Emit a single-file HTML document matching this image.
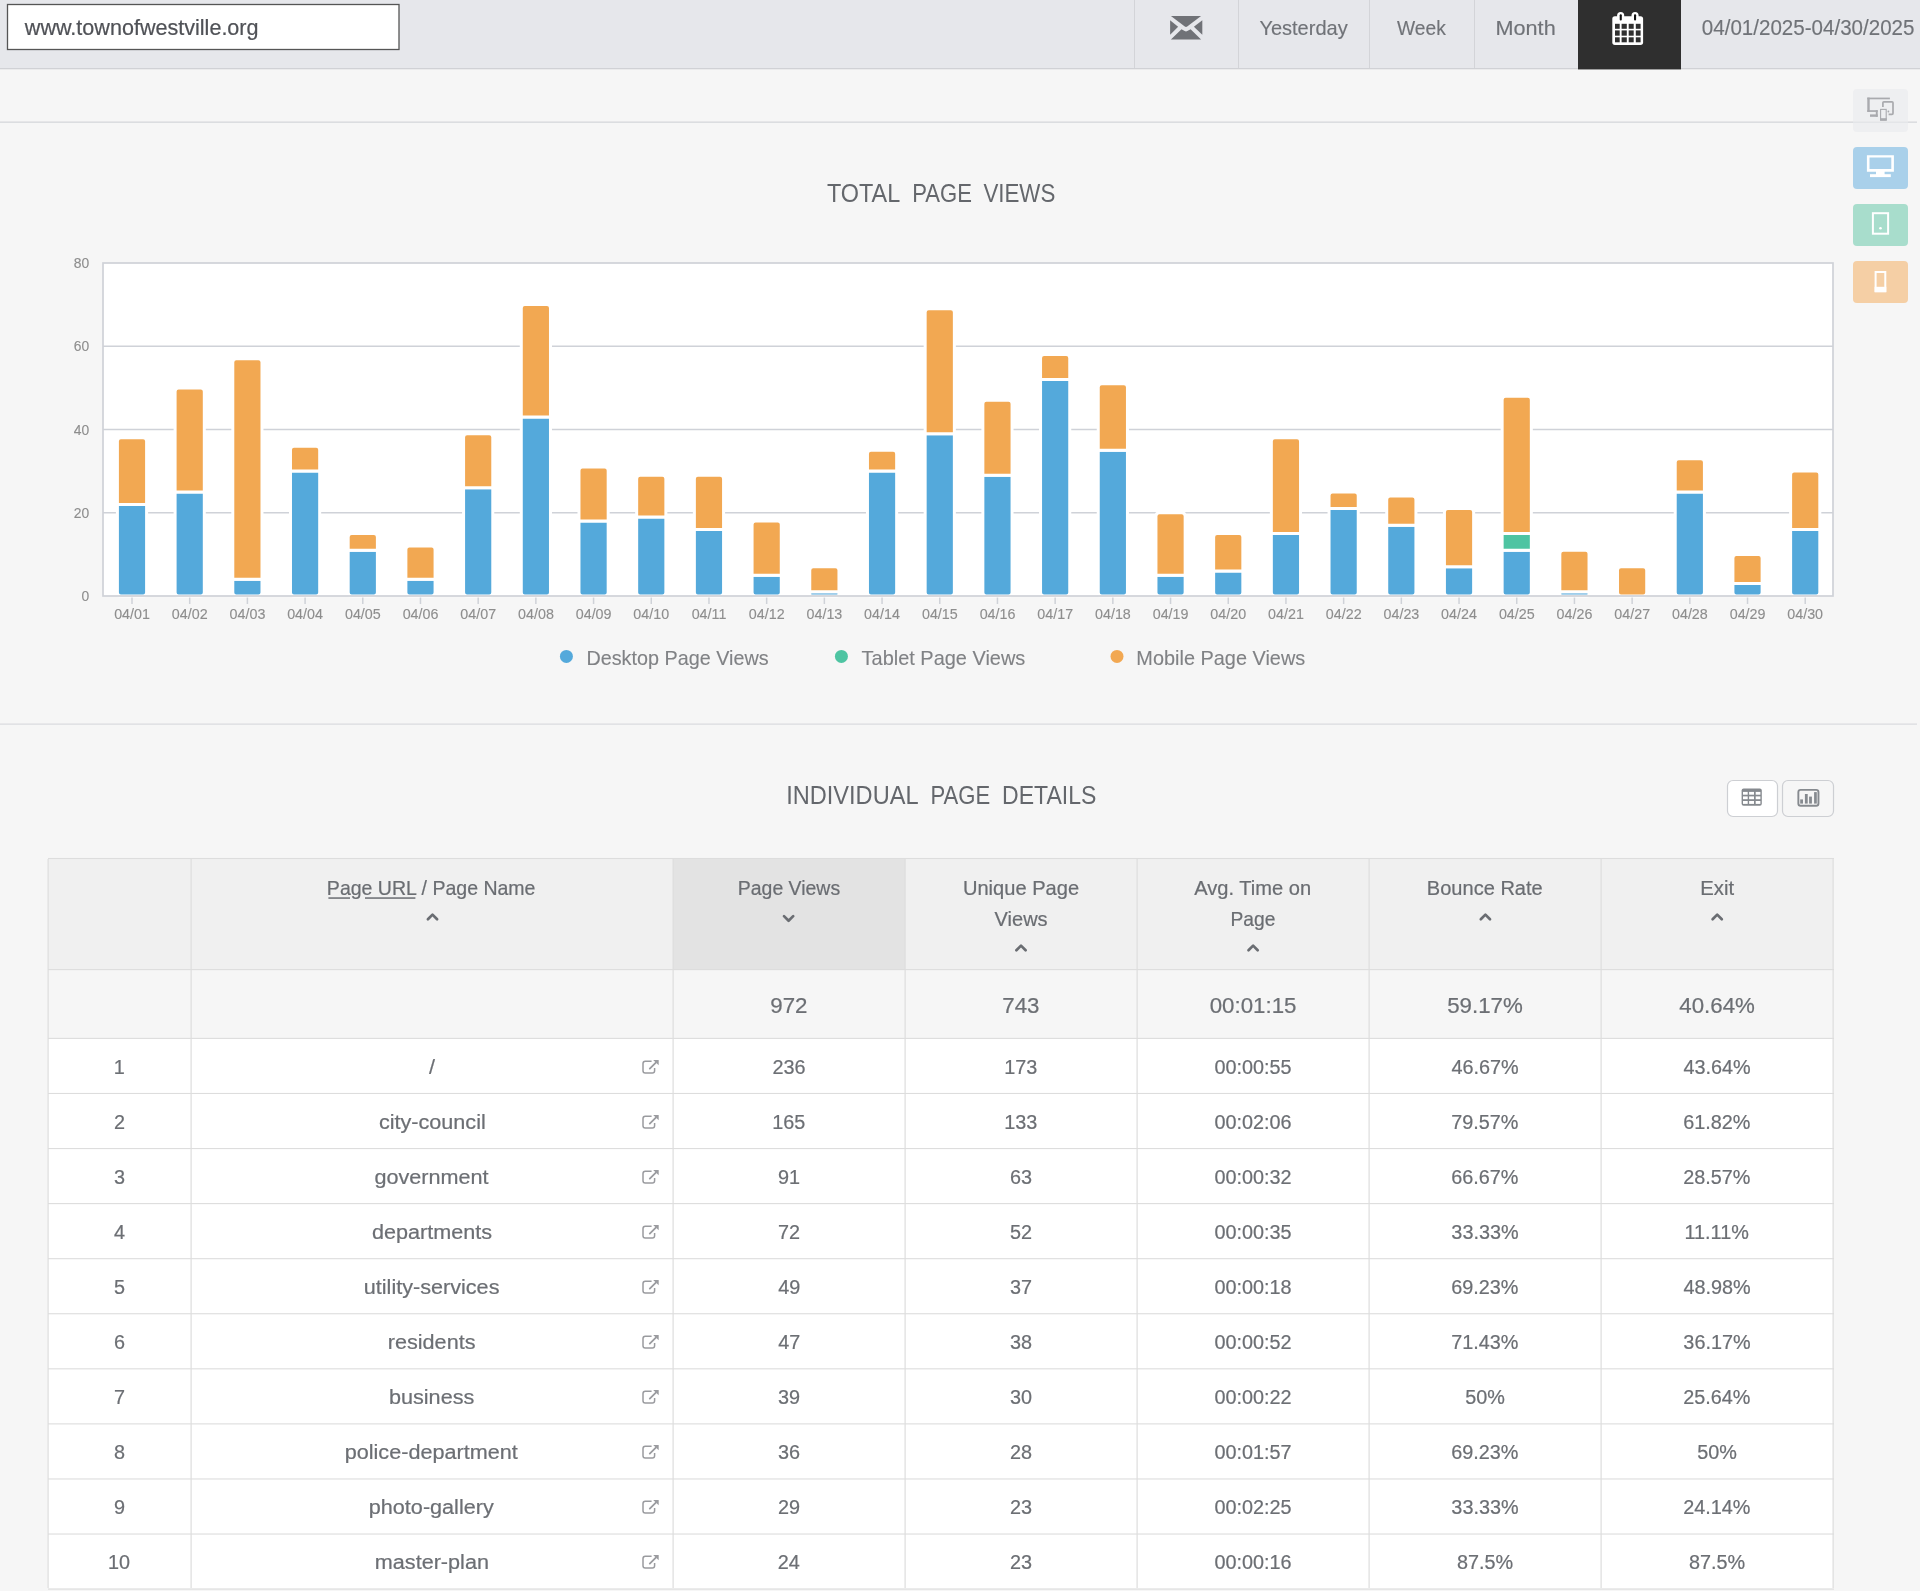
<!DOCTYPE html>
<html><head><meta charset="utf-8"><title>Total Page Views</title><style>
html,body{margin:0;padding:0}
body{width:1920px;height:1591px;overflow:hidden;background:#f6f6f6;position:relative}
svg{position:absolute;left:0;top:0;will-change:transform}
text{font-family:"Liberation Sans",sans-serif}
</style></head>
<body>
<svg width="1920" height="1591" viewBox="0 0 1920 1591">
<rect x="0" y="0" width="1920" height="1591" fill="#f6f6f6"/>
<rect x="0" y="0" width="1920" height="68" fill="#e6e7eb"/>
<rect x="0" y="68" width="1920" height="1.3" fill="#d0d1d5"/>
<rect x="7.5" y="4.5" width="391.5" height="45" fill="#ffffff" stroke="#555555" stroke-width="1.3"/>
<rect x="1134" y="0" width="1" height="68" fill="#d3d4d8"/>
<rect x="1238" y="0" width="1" height="68" fill="#d3d4d8"/>
<rect x="1369" y="0" width="1" height="68" fill="#d3d4d8"/>
<rect x="1474" y="0" width="1" height="68" fill="#d3d4d8"/>
<rect x="1578" y="0" width="103" height="69.4" fill="#2f2f2f"/>
<rect x="0" y="121.6" width="1917" height="1.2" fill="#d9dade"/>
<rect x="1853" y="89" width="55" height="43" rx="4" fill="#eeeff1"/>
<rect x="0" y="121.6" width="1917" height="1.2" fill="#d9dade" opacity="0.6"/>
<rect x="1853" y="147" width="55" height="42" rx="4" fill="#a9d0ea"/>
<rect x="1853" y="204" width="55" height="42" rx="4" fill="#a8ddcc"/>
<rect x="1853" y="261" width="55" height="42" rx="4" fill="#f5cfa5"/>
<rect x="0" y="723.5" width="1917" height="1.2" fill="#d9dade"/>
<rect x="103.0" y="263" width="1730.0" height="333.0" fill="#ffffff"/>
<line x1="103.0" y1="512.75" x2="1833.0" y2="512.75" stroke="#cfd2d8" stroke-width="1.7"/>
<line x1="103.0" y1="429.5" x2="1833.0" y2="429.5" stroke="#cfd2d8" stroke-width="1.7"/>
<line x1="103.0" y1="346.25" x2="1833.0" y2="346.25" stroke="#cfd2d8" stroke-width="1.7"/>
<line x1="132.0" y1="597" x2="132.0" y2="604" stroke="#cfd2d8" stroke-width="1.5"/>
<path d="M117.40,504.43 Q117.40,504.43 117.40,504.43 L146.60,504.43 Q146.60,504.43 146.60,504.43 L146.60,592.50 Q146.60,596.00 143.10,596.00 L120.90,596.00 Q117.40,596.00 117.40,592.50 Z" fill="#54a9db" stroke="#ffffff" stroke-width="3"/>
<path d="M117.40,441.33 Q117.40,437.83 120.90,437.83 L143.10,437.83 Q146.60,437.83 146.60,441.33 L146.60,504.43 Q146.60,504.43 146.60,504.43 L117.40,504.43 Q117.40,504.43 117.40,504.43 Z" fill="#f2a852" stroke="#ffffff" stroke-width="3"/>
<line x1="189.697" y1="597" x2="189.697" y2="604" stroke="#cfd2d8" stroke-width="1.5"/>
<path d="M175.10,491.94 Q175.10,491.94 175.10,491.94 L204.30,491.94 Q204.30,491.94 204.30,491.94 L204.30,592.50 Q204.30,596.00 200.80,596.00 L178.60,596.00 Q175.10,596.00 175.10,592.50 Z" fill="#54a9db" stroke="#ffffff" stroke-width="3"/>
<path d="M175.10,391.38 Q175.10,387.88 178.60,387.88 L200.80,387.88 Q204.30,387.88 204.30,391.38 L204.30,491.94 Q204.30,491.94 204.30,491.94 L175.10,491.94 Q175.10,491.94 175.10,491.94 Z" fill="#f2a852" stroke="#ffffff" stroke-width="3"/>
<line x1="247.394" y1="597" x2="247.394" y2="604" stroke="#cfd2d8" stroke-width="1.5"/>
<path d="M232.79,579.35 Q232.79,579.35 232.79,579.35 L261.99,579.35 Q261.99,579.35 261.99,579.35 L261.99,592.50 Q261.99,596.00 258.49,596.00 L236.29,596.00 Q232.79,596.00 232.79,592.50 Z" fill="#54a9db" stroke="#ffffff" stroke-width="3"/>
<path d="M232.79,362.24 Q232.79,358.74 236.29,358.74 L258.49,358.74 Q261.99,358.74 261.99,362.24 L261.99,579.35 Q261.99,579.35 261.99,579.35 L232.79,579.35 Q232.79,579.35 232.79,579.35 Z" fill="#f2a852" stroke="#ffffff" stroke-width="3"/>
<line x1="305.091" y1="597" x2="305.091" y2="604" stroke="#cfd2d8" stroke-width="1.5"/>
<path d="M290.49,471.12 Q290.49,471.12 290.49,471.12 L319.69,471.12 Q319.69,471.12 319.69,471.12 L319.69,592.50 Q319.69,596.00 316.19,596.00 L293.99,596.00 Q290.49,596.00 290.49,592.50 Z" fill="#54a9db" stroke="#ffffff" stroke-width="3"/>
<path d="M290.49,449.65 Q290.49,446.15 293.99,446.15 L316.19,446.15 Q319.69,446.15 319.69,449.65 L319.69,471.12 Q319.69,471.12 319.69,471.12 L290.49,471.12 Q290.49,471.12 290.49,471.12 Z" fill="#f2a852" stroke="#ffffff" stroke-width="3"/>
<line x1="362.788" y1="597" x2="362.788" y2="604" stroke="#cfd2d8" stroke-width="1.5"/>
<path d="M348.19,550.21 Q348.19,550.21 348.19,550.21 L377.39,550.21 Q377.39,550.21 377.39,550.21 L377.39,592.50 Q377.39,596.00 373.89,596.00 L351.69,596.00 Q348.19,596.00 348.19,592.50 Z" fill="#54a9db" stroke="#ffffff" stroke-width="3"/>
<path d="M348.19,537.06 Q348.19,533.56 351.69,533.56 L373.89,533.56 Q377.39,533.56 377.39,537.06 L377.39,550.21 Q377.39,550.21 377.39,550.21 L348.19,550.21 Q348.19,550.21 348.19,550.21 Z" fill="#f2a852" stroke="#ffffff" stroke-width="3"/>
<line x1="420.485" y1="597" x2="420.485" y2="604" stroke="#cfd2d8" stroke-width="1.5"/>
<path d="M405.88,579.35 Q405.88,579.35 405.88,579.35 L435.08,579.35 Q435.08,579.35 435.08,579.35 L435.08,592.50 Q435.08,596.00 431.58,596.00 L409.38,596.00 Q405.88,596.00 405.88,592.50 Z" fill="#54a9db" stroke="#ffffff" stroke-width="3"/>
<path d="M405.88,549.55 Q405.88,546.05 409.38,546.05 L431.58,546.05 Q435.08,546.05 435.08,549.55 L435.08,579.35 Q435.08,579.35 435.08,579.35 L405.88,579.35 Q405.88,579.35 405.88,579.35 Z" fill="#f2a852" stroke="#ffffff" stroke-width="3"/>
<line x1="478.182" y1="597" x2="478.182" y2="604" stroke="#cfd2d8" stroke-width="1.5"/>
<path d="M463.58,487.77 Q463.58,487.77 463.58,487.77 L492.78,487.77 Q492.78,487.77 492.78,487.77 L492.78,592.50 Q492.78,596.00 489.28,596.00 L467.08,596.00 Q463.58,596.00 463.58,592.50 Z" fill="#54a9db" stroke="#ffffff" stroke-width="3"/>
<path d="M463.58,437.16 Q463.58,433.66 467.08,433.66 L489.28,433.66 Q492.78,433.66 492.78,437.16 L492.78,487.77 Q492.78,487.77 492.78,487.77 L463.58,487.77 Q463.58,487.77 463.58,487.77 Z" fill="#f2a852" stroke="#ffffff" stroke-width="3"/>
<line x1="535.879" y1="597" x2="535.879" y2="604" stroke="#cfd2d8" stroke-width="1.5"/>
<path d="M521.28,417.01 Q521.28,417.01 521.28,417.01 L550.48,417.01 Q550.48,417.01 550.48,417.01 L550.48,592.50 Q550.48,596.00 546.98,596.00 L524.78,596.00 Q521.28,596.00 521.28,592.50 Z" fill="#54a9db" stroke="#ffffff" stroke-width="3"/>
<path d="M521.28,308.12 Q521.28,304.62 524.78,304.62 L546.98,304.62 Q550.48,304.62 550.48,308.12 L550.48,417.01 Q550.48,417.01 550.48,417.01 L521.28,417.01 Q521.28,417.01 521.28,417.01 Z" fill="#f2a852" stroke="#ffffff" stroke-width="3"/>
<line x1="593.576" y1="597" x2="593.576" y2="604" stroke="#cfd2d8" stroke-width="1.5"/>
<path d="M578.98,521.08 Q578.98,521.08 578.98,521.08 L608.18,521.08 Q608.18,521.08 608.18,521.08 L608.18,592.50 Q608.18,596.00 604.68,596.00 L582.48,596.00 Q578.98,596.00 578.98,592.50 Z" fill="#54a9db" stroke="#ffffff" stroke-width="3"/>
<path d="M578.98,470.46 Q578.98,466.96 582.48,466.96 L604.68,466.96 Q608.18,466.96 608.18,470.46 L608.18,521.08 Q608.18,521.08 608.18,521.08 L578.98,521.08 Q578.98,521.08 578.98,521.08 Z" fill="#f2a852" stroke="#ffffff" stroke-width="3"/>
<line x1="651.273" y1="597" x2="651.273" y2="604" stroke="#cfd2d8" stroke-width="1.5"/>
<path d="M636.67,516.91 Q636.67,516.91 636.67,516.91 L665.87,516.91 Q665.87,516.91 665.87,516.91 L665.87,592.50 Q665.87,596.00 662.37,596.00 L640.17,596.00 Q636.67,596.00 636.67,592.50 Z" fill="#54a9db" stroke="#ffffff" stroke-width="3"/>
<path d="M636.67,478.79 Q636.67,475.29 640.17,475.29 L662.37,475.29 Q665.87,475.29 665.87,478.79 L665.87,516.91 Q665.87,516.91 665.87,516.91 L636.67,516.91 Q636.67,516.91 636.67,516.91 Z" fill="#f2a852" stroke="#ffffff" stroke-width="3"/>
<line x1="708.97" y1="597" x2="708.97" y2="604" stroke="#cfd2d8" stroke-width="1.5"/>
<path d="M694.37,529.40 Q694.37,529.40 694.37,529.40 L723.57,529.40 Q723.57,529.40 723.57,529.40 L723.57,592.50 Q723.57,596.00 720.07,596.00 L697.87,596.00 Q694.37,596.00 694.37,592.50 Z" fill="#54a9db" stroke="#ffffff" stroke-width="3"/>
<path d="M694.37,478.79 Q694.37,475.29 697.87,475.29 L720.07,475.29 Q723.57,475.29 723.57,478.79 L723.57,529.40 Q723.57,529.40 723.57,529.40 L694.37,529.40 Q694.37,529.40 694.37,529.40 Z" fill="#f2a852" stroke="#ffffff" stroke-width="3"/>
<line x1="766.667" y1="597" x2="766.667" y2="604" stroke="#cfd2d8" stroke-width="1.5"/>
<path d="M752.07,575.19 Q752.07,575.19 752.07,575.19 L781.27,575.19 Q781.27,575.19 781.27,575.19 L781.27,592.50 Q781.27,596.00 777.77,596.00 L755.57,596.00 Q752.07,596.00 752.07,592.50 Z" fill="#54a9db" stroke="#ffffff" stroke-width="3"/>
<path d="M752.07,524.58 Q752.07,521.08 755.57,521.08 L777.77,521.08 Q781.27,521.08 781.27,524.58 L781.27,575.19 Q781.27,575.19 781.27,575.19 L752.07,575.19 Q752.07,575.19 752.07,575.19 Z" fill="#f2a852" stroke="#ffffff" stroke-width="3"/>
<line x1="824.364" y1="597" x2="824.364" y2="604" stroke="#cfd2d8" stroke-width="1.5"/>
<path d="M809.76,591.84 Q809.76,591.84 809.76,591.84 L838.96,591.84 Q838.96,591.84 838.96,591.84 L838.96,593.92 Q838.96,596.00 836.88,596.00 L811.85,596.00 Q809.76,596.00 809.76,593.92 Z" fill="#54a9db" stroke="#ffffff" stroke-width="3"/>
<path d="M809.76,570.36 Q809.76,566.86 813.26,566.86 L835.46,566.86 Q838.96,566.86 838.96,570.36 L838.96,591.84 Q838.96,591.84 838.96,591.84 L809.76,591.84 Q809.76,591.84 809.76,591.84 Z" fill="#f2a852" stroke="#ffffff" stroke-width="3"/>
<line x1="882.061" y1="597" x2="882.061" y2="604" stroke="#cfd2d8" stroke-width="1.5"/>
<path d="M867.46,471.12 Q867.46,471.12 867.46,471.12 L896.66,471.12 Q896.66,471.12 896.66,471.12 L896.66,592.50 Q896.66,596.00 893.16,596.00 L870.96,596.00 Q867.46,596.00 867.46,592.50 Z" fill="#54a9db" stroke="#ffffff" stroke-width="3"/>
<path d="M867.46,453.81 Q867.46,450.31 870.96,450.31 L893.16,450.31 Q896.66,450.31 896.66,453.81 L896.66,471.12 Q896.66,471.12 896.66,471.12 L867.46,471.12 Q867.46,471.12 867.46,471.12 Z" fill="#f2a852" stroke="#ffffff" stroke-width="3"/>
<line x1="939.758" y1="597" x2="939.758" y2="604" stroke="#cfd2d8" stroke-width="1.5"/>
<path d="M925.16,433.66 Q925.16,433.66 925.16,433.66 L954.36,433.66 Q954.36,433.66 954.36,433.66 L954.36,592.50 Q954.36,596.00 950.86,596.00 L928.66,596.00 Q925.16,596.00 925.16,592.50 Z" fill="#54a9db" stroke="#ffffff" stroke-width="3"/>
<path d="M925.16,312.29 Q925.16,308.79 928.66,308.79 L950.86,308.79 Q954.36,308.79 954.36,312.29 L954.36,433.66 Q954.36,433.66 954.36,433.66 L925.16,433.66 Q925.16,433.66 925.16,433.66 Z" fill="#f2a852" stroke="#ffffff" stroke-width="3"/>
<line x1="997.455" y1="597" x2="997.455" y2="604" stroke="#cfd2d8" stroke-width="1.5"/>
<path d="M982.86,475.29 Q982.86,475.29 982.86,475.29 L1012.06,475.29 Q1012.06,475.29 1012.06,475.29 L1012.06,592.50 Q1012.06,596.00 1008.56,596.00 L986.36,596.00 Q982.86,596.00 982.86,592.50 Z" fill="#54a9db" stroke="#ffffff" stroke-width="3"/>
<path d="M982.86,403.86 Q982.86,400.36 986.36,400.36 L1008.56,400.36 Q1012.06,400.36 1012.06,403.86 L1012.06,475.29 Q1012.06,475.29 1012.06,475.29 L982.86,475.29 Q982.86,475.29 982.86,475.29 Z" fill="#f2a852" stroke="#ffffff" stroke-width="3"/>
<line x1="1055.152" y1="597" x2="1055.152" y2="604" stroke="#cfd2d8" stroke-width="1.5"/>
<path d="M1040.55,379.55 Q1040.55,379.55 1040.55,379.55 L1069.75,379.55 Q1069.75,379.55 1069.75,379.55 L1069.75,592.50 Q1069.75,596.00 1066.25,596.00 L1044.05,596.00 Q1040.55,596.00 1040.55,592.50 Z" fill="#54a9db" stroke="#ffffff" stroke-width="3"/>
<path d="M1040.55,358.08 Q1040.55,354.58 1044.05,354.58 L1066.25,354.58 Q1069.75,354.58 1069.75,358.08 L1069.75,379.55 Q1069.75,379.55 1069.75,379.55 L1040.55,379.55 Q1040.55,379.55 1040.55,379.55 Z" fill="#f2a852" stroke="#ffffff" stroke-width="3"/>
<line x1="1112.8490000000002" y1="597" x2="1112.8490000000002" y2="604" stroke="#cfd2d8" stroke-width="1.5"/>
<path d="M1098.25,450.31 Q1098.25,450.31 1098.25,450.31 L1127.45,450.31 Q1127.45,450.31 1127.45,450.31 L1127.45,592.50 Q1127.45,596.00 1123.95,596.00 L1101.75,596.00 Q1098.25,596.00 1098.25,592.50 Z" fill="#54a9db" stroke="#ffffff" stroke-width="3"/>
<path d="M1098.25,387.21 Q1098.25,383.71 1101.75,383.71 L1123.95,383.71 Q1127.45,383.71 1127.45,387.21 L1127.45,450.31 Q1127.45,450.31 1127.45,450.31 L1098.25,450.31 Q1098.25,450.31 1098.25,450.31 Z" fill="#f2a852" stroke="#ffffff" stroke-width="3"/>
<line x1="1170.546" y1="597" x2="1170.546" y2="604" stroke="#cfd2d8" stroke-width="1.5"/>
<path d="M1155.95,575.19 Q1155.95,575.19 1155.95,575.19 L1185.15,575.19 Q1185.15,575.19 1185.15,575.19 L1185.15,592.50 Q1185.15,596.00 1181.65,596.00 L1159.45,596.00 Q1155.95,596.00 1155.95,592.50 Z" fill="#54a9db" stroke="#ffffff" stroke-width="3"/>
<path d="M1155.95,516.25 Q1155.95,512.75 1159.45,512.75 L1181.65,512.75 Q1185.15,512.75 1185.15,516.25 L1185.15,575.19 Q1185.15,575.19 1185.15,575.19 L1155.95,575.19 Q1155.95,575.19 1155.95,575.19 Z" fill="#f2a852" stroke="#ffffff" stroke-width="3"/>
<line x1="1228.243" y1="597" x2="1228.243" y2="604" stroke="#cfd2d8" stroke-width="1.5"/>
<path d="M1213.64,571.02 Q1213.64,571.02 1213.64,571.02 L1242.84,571.02 Q1242.84,571.02 1242.84,571.02 L1242.84,592.50 Q1242.84,596.00 1239.34,596.00 L1217.14,596.00 Q1213.64,596.00 1213.64,592.50 Z" fill="#54a9db" stroke="#ffffff" stroke-width="3"/>
<path d="M1213.64,537.06 Q1213.64,533.56 1217.14,533.56 L1239.34,533.56 Q1242.84,533.56 1242.84,537.06 L1242.84,571.02 Q1242.84,571.02 1242.84,571.02 L1213.64,571.02 Q1213.64,571.02 1213.64,571.02 Z" fill="#f2a852" stroke="#ffffff" stroke-width="3"/>
<line x1="1285.94" y1="597" x2="1285.94" y2="604" stroke="#cfd2d8" stroke-width="1.5"/>
<path d="M1271.34,533.56 Q1271.34,533.56 1271.34,533.56 L1300.54,533.56 Q1300.54,533.56 1300.54,533.56 L1300.54,592.50 Q1300.54,596.00 1297.04,596.00 L1274.84,596.00 Q1271.34,596.00 1271.34,592.50 Z" fill="#54a9db" stroke="#ffffff" stroke-width="3"/>
<path d="M1271.34,441.33 Q1271.34,437.83 1274.84,437.83 L1297.04,437.83 Q1300.54,437.83 1300.54,441.33 L1300.54,533.56 Q1300.54,533.56 1300.54,533.56 L1271.34,533.56 Q1271.34,533.56 1271.34,533.56 Z" fill="#f2a852" stroke="#ffffff" stroke-width="3"/>
<line x1="1343.6370000000002" y1="597" x2="1343.6370000000002" y2="604" stroke="#cfd2d8" stroke-width="1.5"/>
<path d="M1329.04,508.59 Q1329.04,508.59 1329.04,508.59 L1358.24,508.59 Q1358.24,508.59 1358.24,508.59 L1358.24,592.50 Q1358.24,596.00 1354.74,596.00 L1332.54,596.00 Q1329.04,596.00 1329.04,592.50 Z" fill="#54a9db" stroke="#ffffff" stroke-width="3"/>
<path d="M1329.04,495.44 Q1329.04,491.94 1332.54,491.94 L1354.74,491.94 Q1358.24,491.94 1358.24,495.44 L1358.24,508.59 Q1358.24,508.59 1358.24,508.59 L1329.04,508.59 Q1329.04,508.59 1329.04,508.59 Z" fill="#f2a852" stroke="#ffffff" stroke-width="3"/>
<line x1="1401.334" y1="597" x2="1401.334" y2="604" stroke="#cfd2d8" stroke-width="1.5"/>
<path d="M1386.73,525.24 Q1386.73,525.24 1386.73,525.24 L1415.93,525.24 Q1415.93,525.24 1415.93,525.24 L1415.93,592.50 Q1415.93,596.00 1412.43,596.00 L1390.23,596.00 Q1386.73,596.00 1386.73,592.50 Z" fill="#54a9db" stroke="#ffffff" stroke-width="3"/>
<path d="M1386.73,499.60 Q1386.73,496.10 1390.23,496.10 L1412.43,496.10 Q1415.93,496.10 1415.93,499.60 L1415.93,525.24 Q1415.93,525.24 1415.93,525.24 L1386.73,525.24 Q1386.73,525.24 1386.73,525.24 Z" fill="#f2a852" stroke="#ffffff" stroke-width="3"/>
<line x1="1459.031" y1="597" x2="1459.031" y2="604" stroke="#cfd2d8" stroke-width="1.5"/>
<path d="M1444.43,566.86 Q1444.43,566.86 1444.43,566.86 L1473.63,566.86 Q1473.63,566.86 1473.63,566.86 L1473.63,592.50 Q1473.63,596.00 1470.13,596.00 L1447.93,596.00 Q1444.43,596.00 1444.43,592.50 Z" fill="#54a9db" stroke="#ffffff" stroke-width="3"/>
<path d="M1444.43,512.09 Q1444.43,508.59 1447.93,508.59 L1470.13,508.59 Q1473.63,508.59 1473.63,512.09 L1473.63,566.86 Q1473.63,566.86 1473.63,566.86 L1444.43,566.86 Q1444.43,566.86 1444.43,566.86 Z" fill="#f2a852" stroke="#ffffff" stroke-width="3"/>
<line x1="1516.728" y1="597" x2="1516.728" y2="604" stroke="#cfd2d8" stroke-width="1.5"/>
<path d="M1502.13,550.21 Q1502.13,550.21 1502.13,550.21 L1531.33,550.21 Q1531.33,550.21 1531.33,550.21 L1531.33,592.50 Q1531.33,596.00 1527.83,596.00 L1505.63,596.00 Q1502.13,596.00 1502.13,592.50 Z" fill="#54a9db" stroke="#ffffff" stroke-width="3"/>
<path d="M1502.13,533.56 Q1502.13,533.56 1502.13,533.56 L1531.33,533.56 Q1531.33,533.56 1531.33,533.56 L1531.33,550.21 Q1531.33,550.21 1531.33,550.21 L1502.13,550.21 Q1502.13,550.21 1502.13,550.21 Z" fill="#4ec4a2" stroke="#ffffff" stroke-width="3"/>
<path d="M1502.13,399.70 Q1502.13,396.20 1505.63,396.20 L1527.83,396.20 Q1531.33,396.20 1531.33,399.70 L1531.33,533.56 Q1531.33,533.56 1531.33,533.56 L1502.13,533.56 Q1502.13,533.56 1502.13,533.56 Z" fill="#f2a852" stroke="#ffffff" stroke-width="3"/>
<line x1="1574.4250000000002" y1="597" x2="1574.4250000000002" y2="604" stroke="#cfd2d8" stroke-width="1.5"/>
<path d="M1559.83,591.84 Q1559.83,591.84 1559.83,591.84 L1589.03,591.84 Q1589.03,591.84 1589.03,591.84 L1589.03,593.92 Q1589.03,596.00 1586.94,596.00 L1561.91,596.00 Q1559.83,596.00 1559.83,593.92 Z" fill="#54a9db" stroke="#ffffff" stroke-width="3"/>
<path d="M1559.83,553.71 Q1559.83,550.21 1563.33,550.21 L1585.53,550.21 Q1589.03,550.21 1589.03,553.71 L1589.03,591.84 Q1589.03,591.84 1589.03,591.84 L1559.83,591.84 Q1559.83,591.84 1559.83,591.84 Z" fill="#f2a852" stroke="#ffffff" stroke-width="3"/>
<line x1="1632.122" y1="597" x2="1632.122" y2="604" stroke="#cfd2d8" stroke-width="1.5"/>
<path d="M1617.52,570.36 Q1617.52,566.86 1621.02,566.86 L1643.22,566.86 Q1646.72,566.86 1646.72,570.36 L1646.72,592.50 Q1646.72,596.00 1643.22,596.00 L1621.02,596.00 Q1617.52,596.00 1617.52,592.50 Z" fill="#f2a852" stroke="#ffffff" stroke-width="3"/>
<line x1="1689.819" y1="597" x2="1689.819" y2="604" stroke="#cfd2d8" stroke-width="1.5"/>
<path d="M1675.22,491.94 Q1675.22,491.94 1675.22,491.94 L1704.42,491.94 Q1704.42,491.94 1704.42,491.94 L1704.42,592.50 Q1704.42,596.00 1700.92,596.00 L1678.72,596.00 Q1675.22,596.00 1675.22,592.50 Z" fill="#54a9db" stroke="#ffffff" stroke-width="3"/>
<path d="M1675.22,462.14 Q1675.22,458.64 1678.72,458.64 L1700.92,458.64 Q1704.42,458.64 1704.42,462.14 L1704.42,491.94 Q1704.42,491.94 1704.42,491.94 L1675.22,491.94 Q1675.22,491.94 1675.22,491.94 Z" fill="#f2a852" stroke="#ffffff" stroke-width="3"/>
<line x1="1747.516" y1="597" x2="1747.516" y2="604" stroke="#cfd2d8" stroke-width="1.5"/>
<path d="M1732.92,583.51 Q1732.92,583.51 1732.92,583.51 L1762.12,583.51 Q1762.12,583.51 1762.12,583.51 L1762.12,592.50 Q1762.12,596.00 1758.62,596.00 L1736.42,596.00 Q1732.92,596.00 1732.92,592.50 Z" fill="#54a9db" stroke="#ffffff" stroke-width="3"/>
<path d="M1732.92,557.88 Q1732.92,554.38 1736.42,554.38 L1758.62,554.38 Q1762.12,554.38 1762.12,557.88 L1762.12,583.51 Q1762.12,583.51 1762.12,583.51 L1732.92,583.51 Q1732.92,583.51 1732.92,583.51 Z" fill="#f2a852" stroke="#ffffff" stroke-width="3"/>
<line x1="1805.2130000000002" y1="597" x2="1805.2130000000002" y2="604" stroke="#cfd2d8" stroke-width="1.5"/>
<path d="M1790.61,529.40 Q1790.61,529.40 1790.61,529.40 L1819.81,529.40 Q1819.81,529.40 1819.81,529.40 L1819.81,592.50 Q1819.81,596.00 1816.31,596.00 L1794.11,596.00 Q1790.61,596.00 1790.61,592.50 Z" fill="#54a9db" stroke="#ffffff" stroke-width="3"/>
<path d="M1790.61,474.62 Q1790.61,471.12 1794.11,471.12 L1816.31,471.12 Q1819.81,471.12 1819.81,474.62 L1819.81,529.40 Q1819.81,529.40 1819.81,529.40 L1790.61,529.40 Q1790.61,529.40 1790.61,529.40 Z" fill="#f2a852" stroke="#ffffff" stroke-width="3"/>
<rect x="103.0" y="263" width="1730.0" height="333.0" fill="none" stroke="#cfd2d8" stroke-width="1.7"/>
<circle cx="566.4" cy="656.4" r="6.5" fill="#54a9db"/>
<circle cx="841.4" cy="656.4" r="6.5" fill="#4ec4a2"/>
<circle cx="1117" cy="656.4" r="6.5" fill="#f2a852"/>
<rect x="48" y="859" width="1785" height="111" fill="#f0f0f0"/>
<rect x="673" y="859" width="232" height="111" fill="#e3e3e3"/>
<rect x="48" y="970" width="1785" height="68" fill="#f6f6f6"/>
<rect x="48" y="1038" width="1785" height="550" fill="#ffffff"/>
<rect x="48" y="857.95" width="1786" height="1.1" fill="#dddddd"/>
<rect x="48" y="969.05" width="1786" height="1.1" fill="#dddddd"/>
<rect x="48" y="1037.85" width="1786" height="1.1" fill="#dddddd"/>
<rect x="48" y="1092.92" width="1786" height="1.1" fill="#dddddd"/>
<rect x="48" y="1147.99" width="1786" height="1.1" fill="#dddddd"/>
<rect x="48" y="1203.06" width="1786" height="1.1" fill="#dddddd"/>
<rect x="48" y="1258.13" width="1786" height="1.1" fill="#dddddd"/>
<rect x="48" y="1313.20" width="1786" height="1.1" fill="#dddddd"/>
<rect x="48" y="1368.27" width="1786" height="1.1" fill="#dddddd"/>
<rect x="48" y="1423.34" width="1786" height="1.1" fill="#dddddd"/>
<rect x="48" y="1478.41" width="1786" height="1.1" fill="#dddddd"/>
<rect x="48" y="1533.48" width="1786" height="1.1" fill="#dddddd"/>
<rect x="48" y="1588.55" width="1786" height="1.1" fill="#dddddd"/>
<rect x="47.5" y="859" width="1.2" height="729" fill="#dddddd"/>
<rect x="190.5" y="859" width="1.2" height="729" fill="#dddddd"/>
<rect x="672.5" y="859" width="1.2" height="729" fill="#dddddd"/>
<rect x="904.5" y="859" width="1.2" height="729" fill="#dddddd"/>
<rect x="1136.5" y="859" width="1.2" height="729" fill="#dddddd"/>
<rect x="1368.5" y="859" width="1.2" height="729" fill="#dddddd"/>
<rect x="1600.5" y="859" width="1.2" height="729" fill="#dddddd"/>
<rect x="1832.5" y="859" width="1.2" height="729" fill="#dddddd"/>
<rect x="328.4" y="897.3" width="21.6" height="1.5" fill="#6a6d72"/>
<rect x="365" y="897.3" width="50.4" height="1.5" fill="#6a6d72"/>
<path d="M427.9,919.2 L432.5,914.6 L437.1,919.2" fill="none" stroke="#6a6d72" stroke-width="2.7" stroke-linecap="round" stroke-linejoin="round"/>
<path d="M784.0,916.1 L788.6,920.7 L793.2,916.1" fill="none" stroke="#6a6d72" stroke-width="2.7" stroke-linecap="round" stroke-linejoin="round"/>
<path d="M1016.4,950.2 L1021,945.6 L1025.6,950.2" fill="none" stroke="#6a6d72" stroke-width="2.7" stroke-linecap="round" stroke-linejoin="round"/>
<path d="M1248.5,950.2 L1253.1,945.6 L1257.6999999999998,950.2" fill="none" stroke="#6a6d72" stroke-width="2.7" stroke-linecap="round" stroke-linejoin="round"/>
<path d="M1480.8000000000002,919.2 L1485.4,914.6 L1490.0,919.2" fill="none" stroke="#6a6d72" stroke-width="2.7" stroke-linecap="round" stroke-linejoin="round"/>
<path d="M1712.6000000000001,919.2 L1717.2,914.6 L1721.8,919.2" fill="none" stroke="#6a6d72" stroke-width="2.7" stroke-linecap="round" stroke-linejoin="round"/>
<g transform="translate(0 0)" fill="none" stroke="#9a9b9f" stroke-width="1.5"><path d="M651.6,1061.3 H645.3 Q643,1061.3 643,1063.6 V1070.7 Q643,1073 645.3,1073 H652.3 Q654.6,1073 654.6,1070.7 V1068.1"/><path d="M649.8,1068.6 L655.6,1062.8" stroke-width="1.8" stroke-linecap="round"/><path d="M653.2,1060 H658.7 V1065.3 Z" fill="#9a9b9f" stroke="none"/></g>
<g transform="translate(0 55)" fill="none" stroke="#9a9b9f" stroke-width="1.5"><path d="M651.6,1061.3 H645.3 Q643,1061.3 643,1063.6 V1070.7 Q643,1073 645.3,1073 H652.3 Q654.6,1073 654.6,1070.7 V1068.1"/><path d="M649.8,1068.6 L655.6,1062.8" stroke-width="1.8" stroke-linecap="round"/><path d="M653.2,1060 H658.7 V1065.3 Z" fill="#9a9b9f" stroke="none"/></g>
<g transform="translate(0 110)" fill="none" stroke="#9a9b9f" stroke-width="1.5"><path d="M651.6,1061.3 H645.3 Q643,1061.3 643,1063.6 V1070.7 Q643,1073 645.3,1073 H652.3 Q654.6,1073 654.6,1070.7 V1068.1"/><path d="M649.8,1068.6 L655.6,1062.8" stroke-width="1.8" stroke-linecap="round"/><path d="M653.2,1060 H658.7 V1065.3 Z" fill="#9a9b9f" stroke="none"/></g>
<g transform="translate(0 165)" fill="none" stroke="#9a9b9f" stroke-width="1.5"><path d="M651.6,1061.3 H645.3 Q643,1061.3 643,1063.6 V1070.7 Q643,1073 645.3,1073 H652.3 Q654.6,1073 654.6,1070.7 V1068.1"/><path d="M649.8,1068.6 L655.6,1062.8" stroke-width="1.8" stroke-linecap="round"/><path d="M653.2,1060 H658.7 V1065.3 Z" fill="#9a9b9f" stroke="none"/></g>
<g transform="translate(0 220)" fill="none" stroke="#9a9b9f" stroke-width="1.5"><path d="M651.6,1061.3 H645.3 Q643,1061.3 643,1063.6 V1070.7 Q643,1073 645.3,1073 H652.3 Q654.6,1073 654.6,1070.7 V1068.1"/><path d="M649.8,1068.6 L655.6,1062.8" stroke-width="1.8" stroke-linecap="round"/><path d="M653.2,1060 H658.7 V1065.3 Z" fill="#9a9b9f" stroke="none"/></g>
<g transform="translate(0 275)" fill="none" stroke="#9a9b9f" stroke-width="1.5"><path d="M651.6,1061.3 H645.3 Q643,1061.3 643,1063.6 V1070.7 Q643,1073 645.3,1073 H652.3 Q654.6,1073 654.6,1070.7 V1068.1"/><path d="M649.8,1068.6 L655.6,1062.8" stroke-width="1.8" stroke-linecap="round"/><path d="M653.2,1060 H658.7 V1065.3 Z" fill="#9a9b9f" stroke="none"/></g>
<g transform="translate(0 330)" fill="none" stroke="#9a9b9f" stroke-width="1.5"><path d="M651.6,1061.3 H645.3 Q643,1061.3 643,1063.6 V1070.7 Q643,1073 645.3,1073 H652.3 Q654.6,1073 654.6,1070.7 V1068.1"/><path d="M649.8,1068.6 L655.6,1062.8" stroke-width="1.8" stroke-linecap="round"/><path d="M653.2,1060 H658.7 V1065.3 Z" fill="#9a9b9f" stroke="none"/></g>
<g transform="translate(0 385)" fill="none" stroke="#9a9b9f" stroke-width="1.5"><path d="M651.6,1061.3 H645.3 Q643,1061.3 643,1063.6 V1070.7 Q643,1073 645.3,1073 H652.3 Q654.6,1073 654.6,1070.7 V1068.1"/><path d="M649.8,1068.6 L655.6,1062.8" stroke-width="1.8" stroke-linecap="round"/><path d="M653.2,1060 H658.7 V1065.3 Z" fill="#9a9b9f" stroke="none"/></g>
<g transform="translate(0 440)" fill="none" stroke="#9a9b9f" stroke-width="1.5"><path d="M651.6,1061.3 H645.3 Q643,1061.3 643,1063.6 V1070.7 Q643,1073 645.3,1073 H652.3 Q654.6,1073 654.6,1070.7 V1068.1"/><path d="M649.8,1068.6 L655.6,1062.8" stroke-width="1.8" stroke-linecap="round"/><path d="M653.2,1060 H658.7 V1065.3 Z" fill="#9a9b9f" stroke="none"/></g>
<g transform="translate(0 495)" fill="none" stroke="#9a9b9f" stroke-width="1.5"><path d="M651.6,1061.3 H645.3 Q643,1061.3 643,1063.6 V1070.7 Q643,1073 645.3,1073 H652.3 Q654.6,1073 654.6,1070.7 V1068.1"/><path d="M649.8,1068.6 L655.6,1062.8" stroke-width="1.8" stroke-linecap="round"/><path d="M653.2,1060 H658.7 V1065.3 Z" fill="#9a9b9f" stroke="none"/></g>
<g fill="#707277"><path d="M1170.9,16.1 H1201.1 L1187.2,26.6 Q1186,27.4 1184.8,26.6 Z"/><path d="M1170.1,20.3 L1178.1,26.8 L1170.1,34.7 Z"/><path d="M1202.3,20.3 L1193.9,26.8 L1202.3,34.7 Z"/><path d="M1170.9,39.6 L1181.5,29.3 L1184.7,31.1 Q1186,31.8 1187.3,31.1 L1190.6,29.3 L1201.1,39.6 Z"/></g>
<rect x="1612.3" y="16.2" width="30.8" height="28.7" rx="2.6" fill="#ffffff"/>
<rect x="1617.1" y="12" width="7.1" height="10" rx="3.5" fill="#ffffff"/>
<rect x="1631.5" y="12" width="7.1" height="10" rx="3.5" fill="#ffffff"/>
<rect x="1619.7" y="14.3" width="2.1" height="6.1" rx="1" fill="#111"/>
<rect x="1634" y="14.3" width="2.1" height="6.1" rx="1" fill="#111"/>
<rect x="1615" y="23.8" width="4.70" height="5.00" fill="#2f2f2f"/>
<rect x="1615" y="30.4" width="4.70" height="5.30" fill="#2f2f2f"/>
<rect x="1615" y="37.3" width="4.70" height="5.00" fill="#2f2f2f"/>
<rect x="1621.6" y="23.8" width="5.20" height="5.00" fill="#2f2f2f"/>
<rect x="1621.6" y="30.4" width="5.20" height="5.30" fill="#2f2f2f"/>
<rect x="1621.6" y="37.3" width="5.20" height="5.00" fill="#2f2f2f"/>
<rect x="1628.7" y="23.8" width="5.00" height="5.00" fill="#2f2f2f"/>
<rect x="1628.7" y="30.4" width="5.00" height="5.30" fill="#2f2f2f"/>
<rect x="1628.7" y="37.3" width="5.00" height="5.00" fill="#2f2f2f"/>
<rect x="1635.8" y="23.8" width="4.80" height="5.00" fill="#2f2f2f"/>
<rect x="1635.8" y="30.4" width="4.80" height="5.30" fill="#2f2f2f"/>
<rect x="1635.8" y="37.3" width="4.80" height="5.00" fill="#2f2f2f"/>
<g fill="#a9aaae"><rect x="1867.3" y="97.6" width="22.6" height="1.7"/><rect x="1867.3" y="97.6" width="2.4" height="14.3"/><rect x="1867.3" y="110.2" width="10.4" height="1.7"/><rect x="1875.8" y="110.2" width="1.9" height="6.6"/><rect x="1870" y="114.4" width="7.7" height="2.4"/></g>
<path d="M1882.9,107 V102.8 Q1882.9,101.8 1883.9,101.8 H1892 Q1893,101.8 1893,102.8 V113.3 Q1893,114.3 1892,114.3 H1888.6" fill="none" stroke="#a9aaae" stroke-width="1.7"/>
<circle cx="1888.4" cy="111.5" r="0.9" fill="#a9aaae"/>
<rect x="1880.6" y="109.4" width="5.6" height="10.7" fill="none" stroke="#a9aaae" stroke-width="1.1"/>
<rect x="1880.1" y="118.2" width="6.6" height="2.4" fill="#a9aaae"/>
<path fill="#ffffff" fill-rule="evenodd" d="M1866.9,155.2 H1893.9 V171.7 H1866.9 Z M1869.5,157.6 V169.1 H1891.3 V157.6 Z"/>
<rect x="1876" y="171" width="8.6" height="4" fill="#ffffff"/>
<rect x="1870" y="174.2" width="20.8" height="2.9" fill="#ffffff"/>
<rect x="1872.9" y="213.2" width="15.2" height="20.5" fill="none" stroke="#ffffff" stroke-width="2"/>
<circle cx="1880.5" cy="228.3" r="1.3" fill="#ffffff"/>
<rect x="1875.6" y="272" width="9.7" height="19.2" fill="none" stroke="#ffffff" stroke-width="2"/>
<rect x="1874.6" y="286.8" width="11.7" height="5.4" fill="#ffffff"/>
<rect x="1727.5" y="780.5" width="50" height="36" rx="5.5" fill="#ffffff" stroke="#cdcfd3" stroke-width="1.2"/>
<rect x="1782.5" y="780.5" width="51" height="36" rx="5.5" fill="#f6f6f6" stroke="#cdcfd3" stroke-width="1.2"/>
<rect x="1741.6" y="788.4" width="20.2" height="17.3" rx="2" fill="#868a8f"/>
<rect x="1743" y="791.9" width="4.70" height="2.80" fill="#fff"/>
<rect x="1743" y="796.4" width="4.70" height="2.80" fill="#fff"/>
<rect x="1743" y="801" width="4.70" height="2.90" fill="#fff"/>
<rect x="1749.1" y="791.9" width="4.90" height="2.80" fill="#fff"/>
<rect x="1749.1" y="796.4" width="4.90" height="2.80" fill="#fff"/>
<rect x="1749.1" y="801" width="4.90" height="2.90" fill="#fff"/>
<rect x="1755.7" y="791.9" width="4.70" height="2.80" fill="#fff"/>
<rect x="1755.7" y="796.4" width="4.70" height="2.80" fill="#fff"/>
<rect x="1755.7" y="801" width="4.70" height="2.90" fill="#fff"/>
<rect x="1798.35" y="789.85" width="20.1" height="15.9" rx="2.3" fill="none" stroke="#868a8f" stroke-width="1.9"/>
<rect x="1800.2" y="799.4" width="2.80" height="4.20" fill="#868a8f"/>
<rect x="1804.9" y="794" width="2.80" height="9.60" fill="#868a8f"/>
<rect x="1809.1" y="796.6" width="2.80" height="7.00" fill="#868a8f"/>
<rect x="1814.1" y="792.1" width="2.70" height="11.50" fill="#868a8f"/>
<text transform="translate(24.84 35.00) scale(1.0179 1)" font-size="21.2" fill="#505257" stroke="#505257" stroke-width="0.22">www.townofwestville.org</text>
<text transform="translate(1259.39 35.00) scale(0.9637 1)" font-size="20.8" fill="#707378" stroke="#707378" stroke-width="0.15">Yesterday</text>
<text transform="translate(1396.90 35.00) scale(0.9263 1)" font-size="20.8" fill="#707378" stroke="#707378" stroke-width="0.15">Week</text>
<text transform="translate(1495.51 35.00) scale(1.0415 1)" font-size="20.8" fill="#707378" stroke="#707378" stroke-width="0.15">Month</text>
<text transform="translate(1701.86 35.00) scale(0.9656 1)" font-size="21.3" fill="#707378" stroke="#707378" stroke-width="0.15">04/01/2025-04/30/2025</text>
<text transform="translate(826.93 201.90) scale(0.9153 1)" font-size="25.6" fill="#64676c" stroke="#64676c" stroke-width="0.0">TOTAL</text>
<text transform="translate(912.27 201.90) scale(0.8630 1)" font-size="25.6" fill="#64676c" stroke="#64676c" stroke-width="0.0">PAGE</text>
<text transform="translate(983.40 201.90) scale(0.8720 1)" font-size="25.6" fill="#64676c" stroke="#64676c" stroke-width="0.0">VIEWS</text>
<text transform="translate(786.16 803.90) scale(0.9217 1)" font-size="25.6" fill="#64676c" stroke="#64676c" stroke-width="0.0">INDIVIDUAL</text>
<text transform="translate(930.47 803.90) scale(0.8630 1)" font-size="25.6" fill="#64676c" stroke="#64676c" stroke-width="0.0">PAGE</text>
<text transform="translate(1002.10 803.90) scale(0.9005 1)" font-size="25.6" fill="#64676c" stroke="#64676c" stroke-width="0.0">DETAILS</text>
<text transform="translate(586.45 664.70) scale(0.9602 1)" font-size="20.6" fill="#808285" stroke="#808285" stroke-width="0.12">Desktop Page Views</text>
<text transform="translate(861.59 664.70) scale(0.9694 1)" font-size="20.6" fill="#808285" stroke="#808285" stroke-width="0.12">Tablet Page Views</text>
<text transform="translate(1136.35 664.70) scale(0.9660 1)" font-size="20.6" fill="#808285" stroke="#808285" stroke-width="0.12">Mobile Page Views</text>
<text transform="translate(326.87 895.10) scale(0.9389 1)" font-size="20.8" fill="#6a6d72" stroke="#6a6d72" stroke-width="0.22">Page URL / Page Name</text>
<text transform="translate(737.78 895.10) scale(0.9357 1)" font-size="20.8" fill="#6a6d72" stroke="#6a6d72" stroke-width="0.22">Page Views</text>
<text transform="translate(962.94 895.10) scale(0.9659 1)" font-size="20.8" fill="#6a6d72" stroke="#6a6d72" stroke-width="0.22">Unique Page</text>
<text transform="translate(994.60 925.80) scale(0.9622 1)" font-size="20.8" fill="#6a6d72" stroke="#6a6d72" stroke-width="0.22">Views</text>
<text transform="translate(1194.20 895.10) scale(0.9666 1)" font-size="20.8" fill="#6a6d72" stroke="#6a6d72" stroke-width="0.22">Avg. Time on</text>
<text transform="translate(1230.50 925.80) scale(0.9239 1)" font-size="20.8" fill="#6a6d72" stroke="#6a6d72" stroke-width="0.22">Page</text>
<text transform="translate(1426.83 895.10) scale(0.9644 1)" font-size="20.8" fill="#6a6d72" stroke="#6a6d72" stroke-width="0.22">Bounce Rate</text>
<text transform="translate(1700.32 895.10) scale(0.9753 1)" font-size="20.8" fill="#6a6d72" stroke="#6a6d72" stroke-width="0.22">Exit</text>
<text transform="translate(770.32 1013.00) scale(0.9700 1)" font-size="23" fill="#6c6f74" stroke="#6c6f74" stroke-width="0.22">972</text>
<text transform="translate(1002.32 1013.00) scale(0.9700 1)" font-size="23" fill="#6c6f74" stroke="#6c6f74" stroke-width="0.22">743</text>
<text transform="translate(1209.68 1013.00) scale(0.9700 1)" font-size="23" fill="#6c6f74" stroke="#6c6f74" stroke-width="0.22">00:01:15</text>
<text transform="translate(1447.15 1013.00) scale(0.9700 1)" font-size="23" fill="#6c6f74" stroke="#6c6f74" stroke-width="0.22">59.17%</text>
<text transform="translate(1679.32 1013.00) scale(0.9700 1)" font-size="23" fill="#6c6f74" stroke="#6c6f74" stroke-width="0.22">40.64%</text>
<text transform="translate(113.77 1074.20) scale(0.9670 1)" font-size="20.5" fill="#6c6f74" stroke="#6c6f74" stroke-width="0.22">1</text>
<text transform="translate(428.96 1074.20) scale(1.0300 1)" font-size="21" fill="#6c6f74" stroke="#6c6f74" stroke-width="0.22">/</text>
<text transform="translate(772.40 1074.20) scale(0.9670 1)" font-size="20.5" fill="#6c6f74" stroke="#6c6f74" stroke-width="0.22">236</text>
<text transform="translate(1004.24 1074.20) scale(0.9670 1)" font-size="20.5" fill="#6c6f74" stroke="#6c6f74" stroke-width="0.22">173</text>
<text transform="translate(1214.51 1074.20) scale(0.9670 1)" font-size="20.5" fill="#6c6f74" stroke="#6c6f74" stroke-width="0.22">00:00:55</text>
<text transform="translate(1451.52 1074.20) scale(0.9670 1)" font-size="20.5" fill="#6c6f74" stroke="#6c6f74" stroke-width="0.22">46.67%</text>
<text transform="translate(1683.52 1074.20) scale(0.9670 1)" font-size="20.5" fill="#6c6f74" stroke="#6c6f74" stroke-width="0.22">43.64%</text>
<text transform="translate(113.92 1129.20) scale(0.9670 1)" font-size="20.5" fill="#6c6f74" stroke="#6c6f74" stroke-width="0.22">2</text>
<text transform="translate(378.89 1129.20) scale(1.0300 1)" font-size="21" fill="#6c6f74" stroke="#6c6f74" stroke-width="0.22">city-council</text>
<text transform="translate(772.24 1129.20) scale(0.9670 1)" font-size="20.5" fill="#6c6f74" stroke="#6c6f74" stroke-width="0.22">165</text>
<text transform="translate(1004.24 1129.20) scale(0.9670 1)" font-size="20.5" fill="#6c6f74" stroke="#6c6f74" stroke-width="0.22">133</text>
<text transform="translate(1214.51 1129.20) scale(0.9670 1)" font-size="20.5" fill="#6c6f74" stroke="#6c6f74" stroke-width="0.22">00:02:06</text>
<text transform="translate(1451.21 1129.20) scale(0.9670 1)" font-size="20.5" fill="#6c6f74" stroke="#6c6f74" stroke-width="0.22">79.57%</text>
<text transform="translate(1683.21 1129.20) scale(0.9670 1)" font-size="20.5" fill="#6c6f74" stroke="#6c6f74" stroke-width="0.22">61.82%</text>
<text transform="translate(114.08 1184.20) scale(0.9670 1)" font-size="20.5" fill="#6c6f74" stroke="#6c6f74" stroke-width="0.22">3</text>
<text transform="translate(374.51 1184.20) scale(1.0300 1)" font-size="21" fill="#6c6f74" stroke="#6c6f74" stroke-width="0.22">government</text>
<text transform="translate(777.91 1184.20) scale(0.9670 1)" font-size="20.5" fill="#6c6f74" stroke="#6c6f74" stroke-width="0.22">91</text>
<text transform="translate(1009.91 1184.20) scale(0.9670 1)" font-size="20.5" fill="#6c6f74" stroke="#6c6f74" stroke-width="0.22">63</text>
<text transform="translate(1214.51 1184.20) scale(0.9670 1)" font-size="20.5" fill="#6c6f74" stroke="#6c6f74" stroke-width="0.22">00:00:32</text>
<text transform="translate(1451.21 1184.20) scale(0.9670 1)" font-size="20.5" fill="#6c6f74" stroke="#6c6f74" stroke-width="0.22">66.67%</text>
<text transform="translate(1683.21 1184.20) scale(0.9670 1)" font-size="20.5" fill="#6c6f74" stroke="#6c6f74" stroke-width="0.22">28.57%</text>
<text transform="translate(114.08 1239.20) scale(0.9670 1)" font-size="20.5" fill="#6c6f74" stroke="#6c6f74" stroke-width="0.22">4</text>
<text transform="translate(371.88 1239.20) scale(1.0300 1)" font-size="21" fill="#6c6f74" stroke="#6c6f74" stroke-width="0.22">departments</text>
<text transform="translate(777.91 1239.20) scale(0.9670 1)" font-size="20.5" fill="#6c6f74" stroke="#6c6f74" stroke-width="0.22">72</text>
<text transform="translate(1010.07 1239.20) scale(0.9670 1)" font-size="20.5" fill="#6c6f74" stroke="#6c6f74" stroke-width="0.22">52</text>
<text transform="translate(1214.51 1239.20) scale(0.9670 1)" font-size="20.5" fill="#6c6f74" stroke="#6c6f74" stroke-width="0.22">00:00:35</text>
<text transform="translate(1451.37 1239.20) scale(0.9670 1)" font-size="20.5" fill="#6c6f74" stroke="#6c6f74" stroke-width="0.22">33.33%</text>
<text transform="translate(1684.53 1239.20) scale(0.9670 1)" font-size="20.5" fill="#6c6f74" stroke="#6c6f74" stroke-width="0.22">11.11%</text>
<text transform="translate(114.08 1294.20) scale(0.9670 1)" font-size="20.5" fill="#6c6f74" stroke="#6c6f74" stroke-width="0.22">5</text>
<text transform="translate(363.76 1294.20) scale(1.0300 1)" font-size="21" fill="#6c6f74" stroke="#6c6f74" stroke-width="0.22">utility-services</text>
<text transform="translate(778.22 1294.20) scale(0.9670 1)" font-size="20.5" fill="#6c6f74" stroke="#6c6f74" stroke-width="0.22">49</text>
<text transform="translate(1010.07 1294.20) scale(0.9670 1)" font-size="20.5" fill="#6c6f74" stroke="#6c6f74" stroke-width="0.22">37</text>
<text transform="translate(1214.51 1294.20) scale(0.9670 1)" font-size="20.5" fill="#6c6f74" stroke="#6c6f74" stroke-width="0.22">00:00:18</text>
<text transform="translate(1451.21 1294.20) scale(0.9670 1)" font-size="20.5" fill="#6c6f74" stroke="#6c6f74" stroke-width="0.22">69.23%</text>
<text transform="translate(1683.52 1294.20) scale(0.9670 1)" font-size="20.5" fill="#6c6f74" stroke="#6c6f74" stroke-width="0.22">48.98%</text>
<text transform="translate(113.92 1349.20) scale(0.9670 1)" font-size="20.5" fill="#6c6f74" stroke="#6c6f74" stroke-width="0.22">6</text>
<text transform="translate(387.78 1349.20) scale(1.0300 1)" font-size="21" fill="#6c6f74" stroke="#6c6f74" stroke-width="0.22">residents</text>
<text transform="translate(778.22 1349.20) scale(0.9670 1)" font-size="20.5" fill="#6c6f74" stroke="#6c6f74" stroke-width="0.22">47</text>
<text transform="translate(1010.07 1349.20) scale(0.9670 1)" font-size="20.5" fill="#6c6f74" stroke="#6c6f74" stroke-width="0.22">38</text>
<text transform="translate(1214.51 1349.20) scale(0.9670 1)" font-size="20.5" fill="#6c6f74" stroke="#6c6f74" stroke-width="0.22">00:00:52</text>
<text transform="translate(1451.21 1349.20) scale(0.9670 1)" font-size="20.5" fill="#6c6f74" stroke="#6c6f74" stroke-width="0.22">71.43%</text>
<text transform="translate(1683.37 1349.20) scale(0.9670 1)" font-size="20.5" fill="#6c6f74" stroke="#6c6f74" stroke-width="0.22">36.17%</text>
<text transform="translate(113.92 1404.20) scale(0.9670 1)" font-size="20.5" fill="#6c6f74" stroke="#6c6f74" stroke-width="0.22">7</text>
<text transform="translate(388.98 1404.20) scale(1.0300 1)" font-size="21" fill="#6c6f74" stroke="#6c6f74" stroke-width="0.22">business</text>
<text transform="translate(778.07 1404.20) scale(0.9670 1)" font-size="20.5" fill="#6c6f74" stroke="#6c6f74" stroke-width="0.22">39</text>
<text transform="translate(1009.91 1404.20) scale(0.9670 1)" font-size="20.5" fill="#6c6f74" stroke="#6c6f74" stroke-width="0.22">30</text>
<text transform="translate(1214.51 1404.20) scale(0.9670 1)" font-size="20.5" fill="#6c6f74" stroke="#6c6f74" stroke-width="0.22">00:00:22</text>
<text transform="translate(1465.15 1404.20) scale(0.9670 1)" font-size="20.5" fill="#6c6f74" stroke="#6c6f74" stroke-width="0.22">50%</text>
<text transform="translate(1683.21 1404.20) scale(0.9670 1)" font-size="20.5" fill="#6c6f74" stroke="#6c6f74" stroke-width="0.22">25.64%</text>
<text transform="translate(114.08 1459.20) scale(0.9670 1)" font-size="20.5" fill="#6c6f74" stroke="#6c6f74" stroke-width="0.22">8</text>
<text transform="translate(344.72 1459.20) scale(1.0300 1)" font-size="21" fill="#6c6f74" stroke="#6c6f74" stroke-width="0.22">police-department</text>
<text transform="translate(778.07 1459.20) scale(0.9670 1)" font-size="20.5" fill="#6c6f74" stroke="#6c6f74" stroke-width="0.22">36</text>
<text transform="translate(1009.91 1459.20) scale(0.9670 1)" font-size="20.5" fill="#6c6f74" stroke="#6c6f74" stroke-width="0.22">28</text>
<text transform="translate(1214.51 1459.20) scale(0.9670 1)" font-size="20.5" fill="#6c6f74" stroke="#6c6f74" stroke-width="0.22">00:01:57</text>
<text transform="translate(1451.21 1459.20) scale(0.9670 1)" font-size="20.5" fill="#6c6f74" stroke="#6c6f74" stroke-width="0.22">69.23%</text>
<text transform="translate(1697.15 1459.20) scale(0.9670 1)" font-size="20.5" fill="#6c6f74" stroke="#6c6f74" stroke-width="0.22">50%</text>
<text transform="translate(113.92 1514.20) scale(0.9670 1)" font-size="20.5" fill="#6c6f74" stroke="#6c6f74" stroke-width="0.22">9</text>
<text transform="translate(368.80 1514.20) scale(1.0300 1)" font-size="21" fill="#6c6f74" stroke="#6c6f74" stroke-width="0.22">photo-gallery</text>
<text transform="translate(777.91 1514.20) scale(0.9670 1)" font-size="20.5" fill="#6c6f74" stroke="#6c6f74" stroke-width="0.22">29</text>
<text transform="translate(1009.91 1514.20) scale(0.9670 1)" font-size="20.5" fill="#6c6f74" stroke="#6c6f74" stroke-width="0.22">23</text>
<text transform="translate(1214.51 1514.20) scale(0.9670 1)" font-size="20.5" fill="#6c6f74" stroke="#6c6f74" stroke-width="0.22">00:02:25</text>
<text transform="translate(1451.37 1514.20) scale(0.9670 1)" font-size="20.5" fill="#6c6f74" stroke="#6c6f74" stroke-width="0.22">33.33%</text>
<text transform="translate(1683.21 1514.20) scale(0.9670 1)" font-size="20.5" fill="#6c6f74" stroke="#6c6f74" stroke-width="0.22">24.14%</text>
<text transform="translate(108.10 1569.20) scale(0.9670 1)" font-size="20.5" fill="#6c6f74" stroke="#6c6f74" stroke-width="0.22">10</text>
<text transform="translate(374.83 1569.20) scale(1.0300 1)" font-size="21" fill="#6c6f74" stroke="#6c6f74" stroke-width="0.22">master-plan</text>
<text transform="translate(777.76 1569.20) scale(0.9670 1)" font-size="20.5" fill="#6c6f74" stroke="#6c6f74" stroke-width="0.22">24</text>
<text transform="translate(1009.91 1569.20) scale(0.9670 1)" font-size="20.5" fill="#6c6f74" stroke="#6c6f74" stroke-width="0.22">23</text>
<text transform="translate(1214.51 1569.20) scale(0.9670 1)" font-size="20.5" fill="#6c6f74" stroke="#6c6f74" stroke-width="0.22">00:00:16</text>
<text transform="translate(1456.88 1569.20) scale(0.9670 1)" font-size="20.5" fill="#6c6f74" stroke="#6c6f74" stroke-width="0.22">87.5%</text>
<text transform="translate(1688.88 1569.20) scale(0.9670 1)" font-size="20.5" fill="#6c6f74" stroke="#6c6f74" stroke-width="0.22">87.5%</text>
<text transform="translate(114.17 619.00) scale(1.0000 1)" font-size="14.3" fill="#8e8e8e" stroke="#8e8e8e" stroke-width="0.12">04/01</text>
<text transform="translate(171.87 619.00) scale(1.0000 1)" font-size="14.3" fill="#8e8e8e" stroke="#8e8e8e" stroke-width="0.12">04/02</text>
<text transform="translate(229.57 619.00) scale(1.0000 1)" font-size="14.3" fill="#8e8e8e" stroke="#8e8e8e" stroke-width="0.12">04/03</text>
<text transform="translate(287.15 619.00) scale(1.0000 1)" font-size="14.3" fill="#8e8e8e" stroke="#8e8e8e" stroke-width="0.12">04/04</text>
<text transform="translate(344.96 619.00) scale(1.0000 1)" font-size="14.3" fill="#8e8e8e" stroke="#8e8e8e" stroke-width="0.12">04/05</text>
<text transform="translate(402.66 619.00) scale(1.0000 1)" font-size="14.3" fill="#8e8e8e" stroke="#8e8e8e" stroke-width="0.12">04/06</text>
<text transform="translate(460.36 619.00) scale(1.0000 1)" font-size="14.3" fill="#8e8e8e" stroke="#8e8e8e" stroke-width="0.12">04/07</text>
<text transform="translate(518.05 619.00) scale(1.0000 1)" font-size="14.3" fill="#8e8e8e" stroke="#8e8e8e" stroke-width="0.12">04/08</text>
<text transform="translate(575.75 619.00) scale(1.0000 1)" font-size="14.3" fill="#8e8e8e" stroke="#8e8e8e" stroke-width="0.12">04/09</text>
<text transform="translate(633.34 619.00) scale(1.0000 1)" font-size="14.3" fill="#8e8e8e" stroke="#8e8e8e" stroke-width="0.12">04/10</text>
<text transform="translate(691.67 619.00) scale(1.0000 1)" font-size="14.3" fill="#8e8e8e" stroke="#8e8e8e" stroke-width="0.12">04/11</text>
<text transform="translate(748.84 619.00) scale(1.0000 1)" font-size="14.3" fill="#8e8e8e" stroke="#8e8e8e" stroke-width="0.12">04/12</text>
<text transform="translate(806.54 619.00) scale(1.0000 1)" font-size="14.3" fill="#8e8e8e" stroke="#8e8e8e" stroke-width="0.12">04/13</text>
<text transform="translate(864.12 619.00) scale(1.0000 1)" font-size="14.3" fill="#8e8e8e" stroke="#8e8e8e" stroke-width="0.12">04/14</text>
<text transform="translate(921.93 619.00) scale(1.0000 1)" font-size="14.3" fill="#8e8e8e" stroke="#8e8e8e" stroke-width="0.12">04/15</text>
<text transform="translate(979.63 619.00) scale(1.0000 1)" font-size="14.3" fill="#8e8e8e" stroke="#8e8e8e" stroke-width="0.12">04/16</text>
<text transform="translate(1037.33 619.00) scale(1.0000 1)" font-size="14.3" fill="#8e8e8e" stroke="#8e8e8e" stroke-width="0.12">04/17</text>
<text transform="translate(1095.02 619.00) scale(1.0000 1)" font-size="14.3" fill="#8e8e8e" stroke="#8e8e8e" stroke-width="0.12">04/18</text>
<text transform="translate(1152.72 619.00) scale(1.0000 1)" font-size="14.3" fill="#8e8e8e" stroke="#8e8e8e" stroke-width="0.12">04/19</text>
<text transform="translate(1210.31 619.00) scale(1.0000 1)" font-size="14.3" fill="#8e8e8e" stroke="#8e8e8e" stroke-width="0.12">04/20</text>
<text transform="translate(1268.11 619.00) scale(1.0000 1)" font-size="14.3" fill="#8e8e8e" stroke="#8e8e8e" stroke-width="0.12">04/21</text>
<text transform="translate(1325.81 619.00) scale(1.0000 1)" font-size="14.3" fill="#8e8e8e" stroke="#8e8e8e" stroke-width="0.12">04/22</text>
<text transform="translate(1383.51 619.00) scale(1.0000 1)" font-size="14.3" fill="#8e8e8e" stroke="#8e8e8e" stroke-width="0.12">04/23</text>
<text transform="translate(1441.09 619.00) scale(1.0000 1)" font-size="14.3" fill="#8e8e8e" stroke="#8e8e8e" stroke-width="0.12">04/24</text>
<text transform="translate(1498.90 619.00) scale(1.0000 1)" font-size="14.3" fill="#8e8e8e" stroke="#8e8e8e" stroke-width="0.12">04/25</text>
<text transform="translate(1556.60 619.00) scale(1.0000 1)" font-size="14.3" fill="#8e8e8e" stroke="#8e8e8e" stroke-width="0.12">04/26</text>
<text transform="translate(1614.30 619.00) scale(1.0000 1)" font-size="14.3" fill="#8e8e8e" stroke="#8e8e8e" stroke-width="0.12">04/27</text>
<text transform="translate(1671.99 619.00) scale(1.0000 1)" font-size="14.3" fill="#8e8e8e" stroke="#8e8e8e" stroke-width="0.12">04/28</text>
<text transform="translate(1729.69 619.00) scale(1.0000 1)" font-size="14.3" fill="#8e8e8e" stroke="#8e8e8e" stroke-width="0.12">04/29</text>
<text transform="translate(1787.28 619.00) scale(1.0000 1)" font-size="14.3" fill="#8e8e8e" stroke="#8e8e8e" stroke-width="0.12">04/30</text>
<text transform="translate(81.53 601.10) scale(0.9700 1)" font-size="14.3" fill="#8e8e8e" stroke="#8e8e8e" stroke-width="0.12">0</text>
<text transform="translate(73.82 517.85) scale(0.9700 1)" font-size="14.3" fill="#8e8e8e" stroke="#8e8e8e" stroke-width="0.12">20</text>
<text transform="translate(73.82 434.60) scale(0.9700 1)" font-size="14.3" fill="#8e8e8e" stroke="#8e8e8e" stroke-width="0.12">40</text>
<text transform="translate(73.82 351.35) scale(0.9700 1)" font-size="14.3" fill="#8e8e8e" stroke="#8e8e8e" stroke-width="0.12">60</text>
<text transform="translate(73.82 268.10) scale(0.9700 1)" font-size="14.3" fill="#8e8e8e" stroke="#8e8e8e" stroke-width="0.12">80</text>
</svg>
</body></html>
